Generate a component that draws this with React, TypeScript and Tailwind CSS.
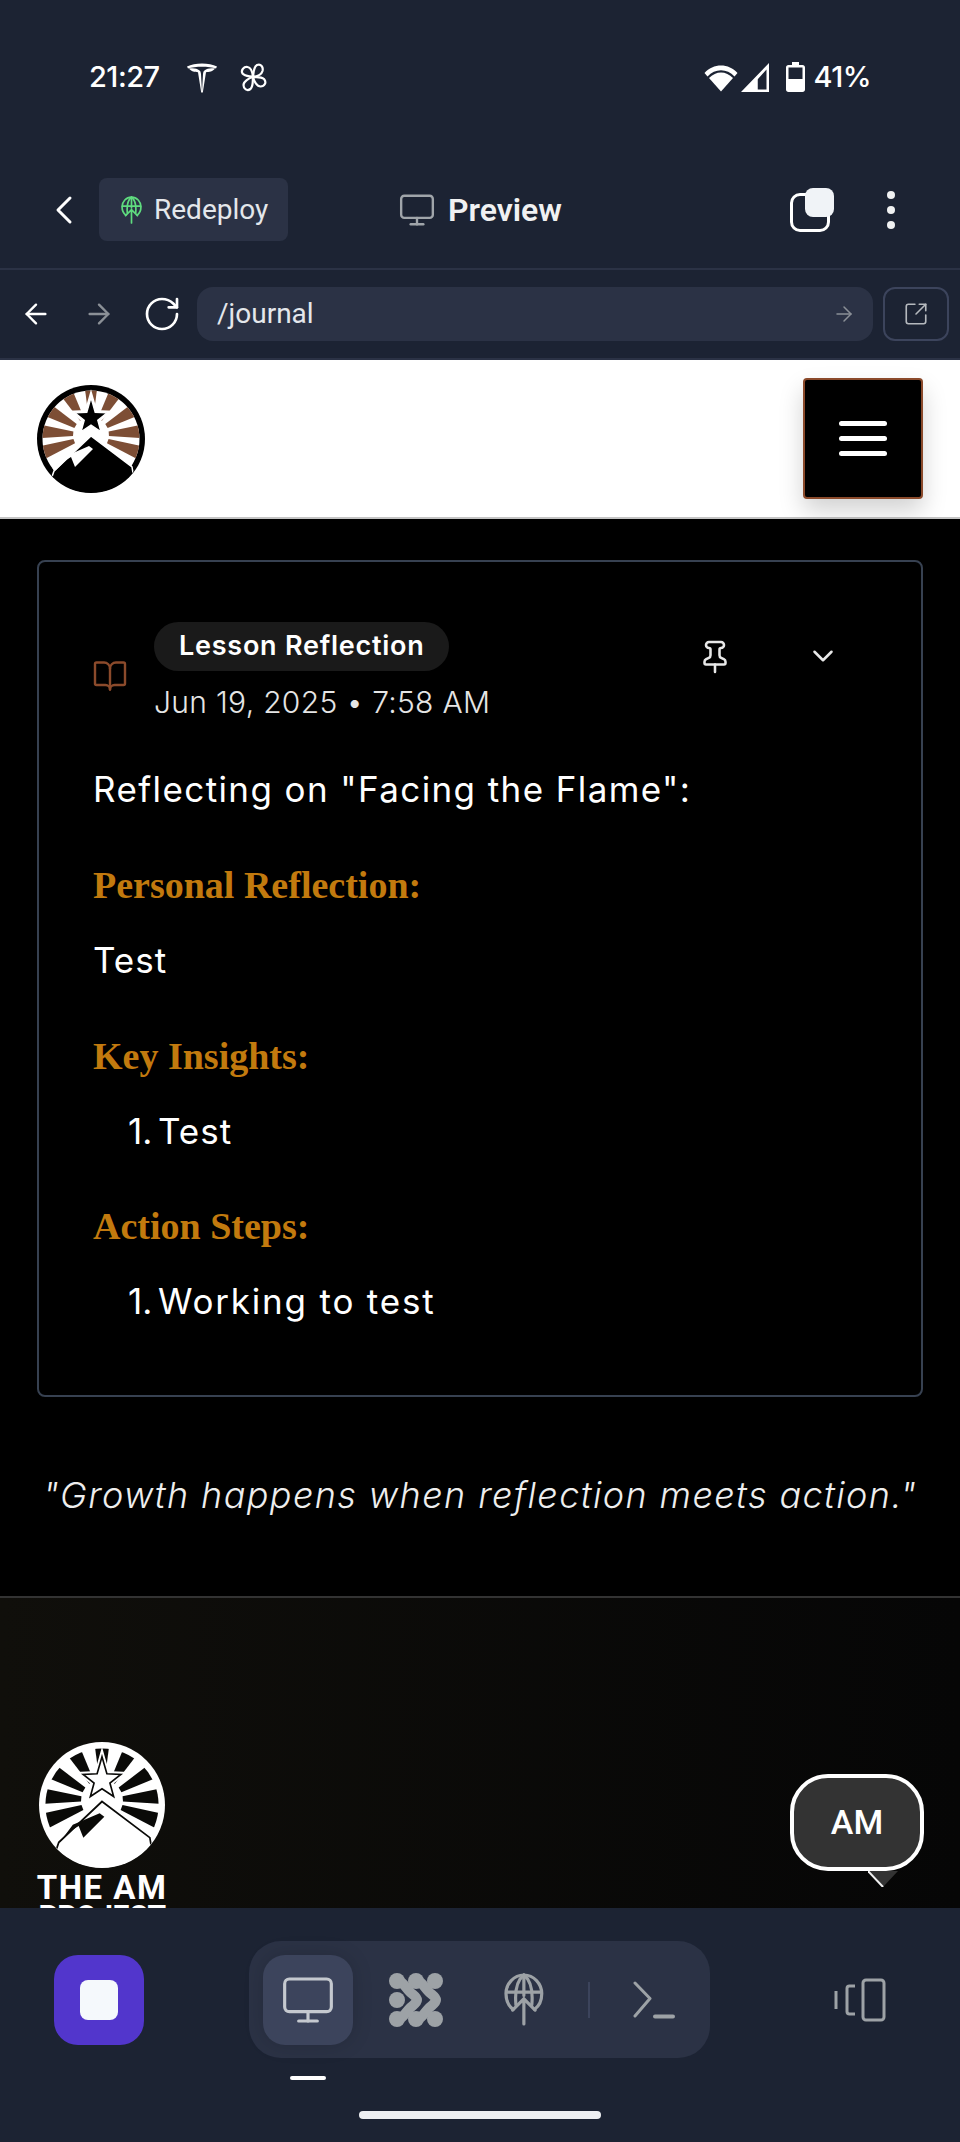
import { ArrowLeft, ArrowRight, BookOpen, ChevronDown, ChevronLeft, Monitor, Pin, RotateCw, SquareArrowOutUpRight } from 'lucide-react';

const wedge = (cx: number, cy: number, deg: number, half: number, r1: number, r2: number) => {
  const pt = (a: number, r: number) => {
    const t = ((a - 90) * Math.PI) / 180;
    return `${(cx + r * Math.cos(t)).toFixed(2)},${(cy + r * Math.sin(t)).toFixed(2)}`;
  };
  return [pt(deg - half, r1), pt(deg - half, r2), pt(deg + half, r2), pt(deg + half, r1)].join(' ');
};

const star = (cx: number, cy: number, r: number) => {
  const out: string[] = [];
  for (let i = 0; i < 10; i++) {
    const t = ((i * 36 - 90) * Math.PI) / 180;
    const rad = i % 2 === 0 ? (i === 0 ? r * 1.2 : r) : r * 0.42;
    out.push(`${(cx + rad * Math.cos(t)).toFixed(2)},${(cy + rad * Math.sin(t)).toFixed(2)}`);
  }
  return out.join(' ');
};

const PEAK = '54,51 95,82 100,112 8,112 17,86';
const CRACK = '17,87 29,75 34,72 38,82 56,64 52,61 36,68 29,71';

function Logo({ size, ring, paper, ray, mark, outline }: { size: number; ring: string; paper: string; ray: string; mark: string; outline: string }) {
  const angles = [-110, -86, -60, -30, 0, 30, 60, 86, 110];
  return (
    <svg width={size} height={size} viewBox="0 0 108 108">
      <defs>
        <clipPath id={`inner-${size}`}>
          <circle cx="54" cy="54" r="48.5" />
        </clipPath>
        <clipPath id={`outer-${size}`}>
          <circle cx="54" cy="54" r="53.5" />
        </clipPath>
      </defs>
      <circle cx="54" cy="54" r="54" fill={ring} />
      <circle cx="54" cy="54" r="48.5" fill={paper} />
      <g clipPath={`url(#inner-${size})`}>
        {angles.map((a) => (
          <polygon key={a} points={wedge(54, 50, a, 7.5, 18, 60)} fill={ray} />
        ))}
        <polygon points={PEAK} fill={paper} stroke={paper} strokeWidth="6" />
      </g>
      <g clipPath={`url(#outer-${size})`}>
        <polygon points={PEAK} fill={mark} stroke={outline} strokeWidth="1.5" />
      </g>
      <polygon points={CRACK} fill={outline} />
      <polygon points={star(54, 33, 18)} fill={paper} stroke={paper} strokeWidth="4" />
      <polygon points={star(54, 33, 17)} fill={mark} stroke={outline} strokeWidth="1.4" />
    </svg>
  );
}

function TeslaIcon() {
  return (
    <svg width="32" height="32" viewBox="0 0 32 32" fill="white">
      <path d="M1 5.500C9 1.500 23 1.500 31 5.500L30 7.500C23 5 9 5 2 7.500Z" />
      <path d="M3 7.500C8 7 11 7.500 13.500 9.500C14.500 10 14.700 11 15 13L16 31L17 13C17.300 11 17.500 10 18.500 9.500C21 7.500 24 7 29 7.500C27 10.500 23 11 20 11.200L16.800 31.500H15.200L12 11.200C9 11 5 10.500 3 7.500Z" />
    </svg>
  );
}

function FanIcon() {
  return (
    <svg width="32" height="32" viewBox="0 0 32 32" fill="none" stroke="white" strokeWidth="2.2">
      <path d="M16 16C13 15 8 15.500 5.500 12.500C3.500 9 7 5.500 10.500 6C14 6.500 15.500 11 16 16Z" />
      <path d="M16 16C16.500 12 16.500 6 20 4C24 2.500 26.500 6 25.500 10C24.500 13.500 20 15.500 16 16Z" />
      <path d="M16 16C19.500 16.500 24 15.500 27 18C30 21.500 27.500 25.500 23.500 25.500C20 25.500 17 20.500 16 16Z" />
      <path d="M16 16C15.500 20 16.500 25 13.500 28C10 30.500 6.500 28 6.500 24C6.500 20.500 12 17 16 16Z" />
    </svg>
  );
}

function WifiIcon() {
  return (
    <svg width="34" height="30" viewBox="0 0 34 30" fill="white">
      <path d="M0.500 11C9 1 25 1 33.500 11L30.500 14.500C23 6 11 6 3.500 14.500Z" />
      <path d="M5 16C12 8.500 22 8.500 29 16L17 29.500Z" />
    </svg>
  );
}

function SignalIcon() {
  return (
    <svg width="28" height="29" viewBox="0 0 28 29" fill="white">
      <path d="M28 0V29H0ZM25.500 6.500L16.500 16.500V26.500H25.500Z" fillRule="evenodd" />
      <path d="M16.500 15L2 29H16.500Z" />
    </svg>
  );
}

function BatteryIcon() {
  return (
    <svg width="19" height="30" viewBox="0 0 19 30" fill="white">
      <path d="M6 0H13V3H16.500C18 3 19 4 19 5.500V27.500C19 29 18 30 16.500 30H2.500C1 30 0 29 0 27.500V5.500C0 4 1 3 2.500 3H6ZM2.500 5.500V17H16.500V5.500Z" fillRule="evenodd" />
    </svg>
  );
}

function GlobeUpIcon({ size, color, width }: { size: number; color: string; width: number }) {
  return (
    <svg width={size * 0.75} height={size} viewBox="0 0 30 40" fill="none" stroke={color} strokeWidth={width} strokeLinecap="round">
      <path d="M7 27.500C3.500 25 1.500 20.500 1.500 15.500C1.500 8 7.500 1.500 15 1.500C22.500 1.500 28.500 8 28.500 15.500C28.500 20.500 26.500 25 23 27.500" />
      <path d="M9 24C8 13 10.500 5 15 1.500C19.500 5 22 13 21 24" />
      <path d="M15 1.500V17M2 14.500H28" />
      <path d="M15 38.500V20M6.500 28L15 19.500L23.500 28" />
    </svg>
  );
}

function NetworkIcon() {
  return (
    <svg width="54" height="54" viewBox="0 0 54 54" fill="#9da2a6">
      <circle cx="8" cy="8" r="8" />
      <circle cx="27" cy="8" r="8" />
      <circle cx="46" cy="8" r="8" />
      <circle cx="8" cy="27" r="8" />
      <circle cx="8" cy="46" r="8" />
      <circle cx="27" cy="46" r="8" />
      <circle cx="46" cy="46" r="8" />
      <g fill="none" stroke="#9da2a6" strokeWidth="10" strokeLinecap="round" strokeLinejoin="round">
        <path d="M8 8C14 8 16 14 21 19C24 22 28 24 28 27C28 30 24 32 21 35C16 40 14 46 8 46" />
        <path d="M27 8C33 8 35 14 40 19C43 22 47 24 47 27C47 30 43 32 40 35C35 40 33 46 27 46" />
      </g>
    </svg>
  );
}

function TerminalIcon() {
  return (
    <svg width="42" height="38" viewBox="0 0 42 38" fill="none" stroke="#9da2a6" strokeWidth="3" strokeLinecap="round" strokeLinejoin="round">
      <path d="M2 2L17 17.500L2 35" />
      <path d="M22 35.500H40" strokeWidth="4" />
    </svg>
  );
}

function DevicesIcon() {
  return (
    <svg width="52" height="44" viewBox="0 0 52 44" fill="none" stroke="#9da2a6" strokeWidth="3">
      <rect x="29" y="2" width="21" height="40" rx="3" />
      <path d="M21 8H15.500C14 8 13 9 13 10.500V33.500C13 35 14 36 15.500 36H21" />
      <path d="M2 13V31" />
    </svg>
  );
}

export default function App() {
  return (
    <div className="w-[960px] h-[2142px] flex flex-col overflow-hidden bg-[#1c2333] font-['Roboto',sans-serif] text-white">
      {/* Status bar */}
      <div className="h-[150px] px-[89px] pt-[61px] shrink-0 flex justify-between items-start">
        <div className="flex items-center h-[32px] gap-[26px]">
          <span className="text-[29px] font-medium font-['Inter',sans-serif] tracking-[-0.5px]">21:27</span>
          <div className="flex items-center gap-[19px]">
            <TeslaIcon />
            <FanIcon />
          </div>
        </div>
        <div className="flex items-center h-[32px]">
          <WifiIcon />
          <span className="ml-[3px]"><SignalIcon /></span>
          <span className="ml-[17px]"><BatteryIcon /></span>
          <span className="ml-[8px] text-[29px] font-medium font-['Inter',sans-serif] tracking-[-0.5px]">41%</span>
        </div>
      </div>

      {/* Header */}
      <div className="h-[120px] shrink-0 border-b-2 border-[#2b3245] flex items-center pl-[40px] pr-[65px]">
        <div className="flex items-center w-[370px] mt-[1px]">
          <ChevronLeft size={48} strokeWidth={1.5} className="text-white mr-[11px]" />
          <div className="h-[63px] w-[189px] rounded-lg bg-[#2b3245] flex items-center pl-[22px] gap-[12px]">
            <GlobeUpIcon size={28} color="#5fdc7f" width={2.4} />
            <span className="text-[28px] text-[#e4e7eb]">Redeploy</span>
          </div>
        </div>
        <div className="flex items-center gap-[12px] mt-[1px] ml-[-12px]">
          <Monitor size={38} strokeWidth={1.5} className="text-[#a0a5aa]" />
          <span className="text-[32px] font-semibold text-[#f0f1f2]">Preview</span>
        </div>
        <div className="ml-auto flex items-center gap-[53px] mt-[1px]">
          <div className="relative w-[44px] h-[44px]">
            <div className="absolute left-0 bottom-0 w-[40px] h-[39px] rounded-[10px] border-[3px] border-white" />
            <div className="absolute right-0 top-0 w-[29px] h-[29px] rounded-[8px] bg-[#f0f3f7]" />
          </div>
          <div className="flex flex-col gap-[7px]">
            <div className="w-[8px] h-[8px] rounded-full bg-[#f0f1f2]" />
            <div className="w-[8px] h-[8px] rounded-full bg-[#f0f1f2]" />
            <div className="w-[8px] h-[8px] rounded-full bg-[#f0f1f2]" />
          </div>
        </div>
      </div>

      {/* URL row */}
      <div className="h-[90px] shrink-0 flex items-center pl-[20px] pr-[11px] border-b-2 border-[#2b3245]">
        <ArrowLeft size={32} strokeWidth={1.8} className="text-white" />
        <ArrowRight size={32} strokeWidth={1.8} className="text-[#8b9097] ml-[31px]" />
        <RotateCw size={40} strokeWidth={1.6} className="text-white ml-[27px]" />
        <div className="flex-1 h-[54px] ml-[15px] rounded-2xl bg-[#2b3245] flex items-center pl-[20px] pr-[17px] justify-between">
          <span className="text-[28px] text-[#e4e7eb]">/journal</span>
          <ArrowRight size={24} strokeWidth={1.5} className="text-[#8b9097]" />
        </div>
        <div className="w-[66px] h-[54px] ml-[10px] rounded-xl border-2 border-[#3c445c] flex items-center justify-center">
          <SquareArrowOutUpRight size={26} strokeWidth={1.5} className="text-[#b5b9be]" />
        </div>
      </div>

      {/* Web view */}
      <div className="flex-1 min-h-0 overflow-hidden bg-black relative font-['Inter',sans-serif]">
        <nav className="h-[159px] bg-white border-b-2 border-[#c4c4c4] flex items-center justify-between px-[37px]">
          <Logo size={108} ring="#000000" paper="#ffffff" ray="#7d4e35" mark="#000000" outline="#ffffff" />
          <div className="w-[120px] h-[121px] bg-black border-2 border-[#8b4a2b] rounded-[4px] shadow-[0_12px_24px_rgba(0,0,0,0.18)] flex flex-col items-center justify-center gap-[10px] -mt-[1px]">
            <div className="w-[48px] h-[5px] rounded-full bg-white" />
            <div className="w-[48px] h-[5px] rounded-full bg-white" />
            <div className="w-[48px] h-[5px] rounded-full bg-white" />
          </div>
        </nav>

        <main className="px-[37px] pt-[41px]">
          <section className="h-[837px] border-2 border-[#374151] rounded-lg px-[54px] pt-[60px]">
            <div className="flex items-center">
              <BookOpen size={36} strokeWidth={1.6} className="text-[#8b4a2b] mt-[10px] -ml-[1px] mr-[26px]" />
              <div className="flex flex-col items-start">
                <span className="h-[49px] px-[25px] rounded-full bg-[#1a1a1a] text-[27px] font-semibold flex items-center tracking-[0.75px]">Lesson Reflection</span>
                <span className="mt-[13px] text-[30px] leading-[36px] font-light text-[#e5e5e5] tracking-[0.3px]">Jun 19, 2025 • 7:58 AM</span>
              </div>
              <Pin size={36} strokeWidth={1.7} className="ml-auto mr-[73px] -mt-[28px] text-[#e8e8e8]" />
              <ChevronDown size={34} strokeWidth={1.8} className="mr-[27px] -mt-[30px] text-[#e8e8e8]" />
            </div>
            <p className="mt-[45px] text-[35px] leading-[48px] tracking-[1.4px]">Reflecting on "Facing the Flame":</p>
            <h3 className="mt-[48px] text-[38px] leading-[48px] font-bold text-[#c27a0e] font-['Liberation_Serif',serif]">Personal Reflection:</h3>
            <p className="mt-[27px] text-[35px] leading-[48px] tracking-[1px]">Test</p>
            <h3 className="mt-[48px] text-[38px] leading-[48px] font-bold text-[#c27a0e] font-['Liberation_Serif',serif]">Key Insights:</h3>
            <ol className="mt-[27px] pl-[35px] text-[35px] leading-[48px]">
              <li className="flex"><span className="w-[30px]">1.</span><span className="tracking-[1px]">Test</span></li>
            </ol>
            <h3 className="mt-[47px] text-[38px] leading-[48px] font-bold text-[#c27a0e] font-['Liberation_Serif',serif]">Action Steps:</h3>
            <ol className="mt-[27px] pl-[35px] text-[35px] leading-[48px]">
              <li className="flex"><span className="w-[30px]">1.</span><span className="tracking-[1.8px]">Working to test</span></li>
            </ol>
          </section>
          <p className="mt-[74px] -mx-[20px] text-center text-[36px] leading-[48px] italic font-light text-[#eeeeee] tracking-[1.4px] whitespace-nowrap">"Growth happens when reflection meets action."</p>
        </main>

        <footer className="mt-[77px] h-[400px] border-t-2 border-[#333333] bg-gradient-to-r from-[#100f0b] to-[#060606] pt-[144px] pl-[37px]">
          <div className="w-[130px] flex flex-col items-center">
            <Logo size={126} ring="#ffffff" paper="#ffffff" ray="#0a0a08" mark="#ffffff" outline="#0a0a08" />
            <div className="mt-[6px] text-[33px] leading-[28px] font-bold text-white whitespace-nowrap tracking-[1.5px] font-['Roboto',sans-serif]">THE AM</div>
            <div className="text-[30px] leading-[28px] font-bold text-white whitespace-nowrap tracking-[-0.5px] font-['Roboto',sans-serif]">PROJECT</div>
          </div>
        </footer>

        <div className="absolute left-[790px] top-[1414px] w-[134px] h-[97px] rounded-[38px] border-[4px] border-white bg-[#333333] flex items-center justify-center text-[34px] font-medium font-['Roboto',sans-serif]">
          AM
          <svg width="30" height="16" viewBox="0 0 30 16" className="absolute left-[74px] top-[93px]">
            <path d="M0 0H30L15 16Z" fill="#333333" />
            <path d="M0 0L15 16" stroke="#f2f2f2" strokeWidth="2" fill="none" />
          </svg>
        </div>
      </div>

      {/* Bottom toolbar */}
      <div className="h-[234px] shrink-0 bg-[#1c2333] relative flex flex-col">
        <div className="flex items-center pt-[33px] pl-[54px]">
          <div className="w-[90px] h-[90px] rounded-[24px] bg-[#5236cc] flex items-center justify-center">
            <div className="w-[38px] h-[40px] rounded-lg bg-[#f5f9fc]" />
          </div>
          <div className="ml-[105px] w-[461px] h-[117px] rounded-[32px] bg-[#2b3245] flex items-center pl-[14px]">
            <div className="w-[90px] h-[90px] rounded-[22px] bg-[#3c445c] shadow-[0_0_20px_rgba(0,0,0,0.15)] flex items-center justify-center">
              <Monitor size={56} strokeWidth={1.35} className="text-[#c5c9cf]" />
            </div>
            <div className="ml-[36px]"><NetworkIcon /></div>
            <div className="ml-[61px]"><GlobeUpIcon size={53} color="#9da2a6" width={2.4} /></div>
            <div className="ml-[44px] w-[2px] h-[36px] bg-[#3c445c]" />
            <div className="ml-[43px]"><TerminalIcon /></div>
          </div>
          <div className="ml-[124px]"><DevicesIcon /></div>
        </div>
        <div className="ml-[290px] mt-[18px] w-[36px] h-[4px] bg-white rounded-sm" />
        <div className="ml-[359px] mt-[31px] w-[242px] h-[8px] rounded-full bg-[#eef0f3]" />
      </div>
    </div>
  );
}
